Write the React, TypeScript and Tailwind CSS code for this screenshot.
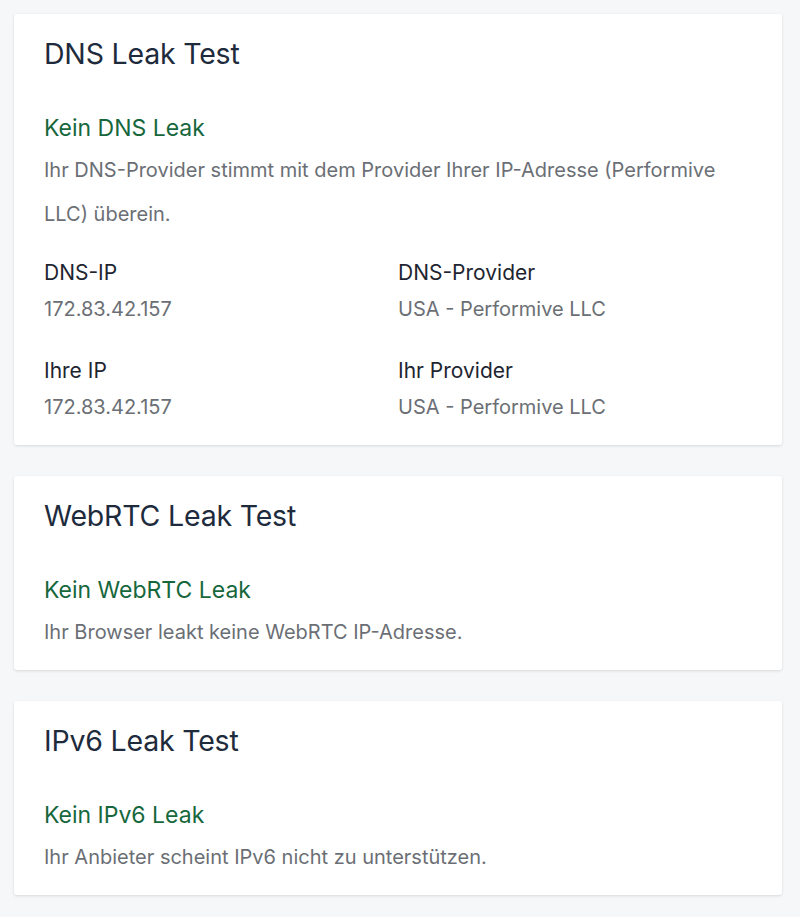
import React from "react";

const font = { fontFamily: 'Inter, "Noto Sans", sans-serif' };

function Card({ title, status, children }: { title: string; status: string; children: React.ReactNode }) {
  return (
    <div className="w-[768px] rounded-[3px] bg-white px-[30px] pt-[22px] pb-[16px] shadow-[0_1px_3px_rgba(0,0,0,0.12)]">
      <h2 className="text-[28.5px] leading-[36px] font-normal text-[#1e2b3c] tracking-[-0.2px]">{title}</h2>
      <div className="mt-[41px] text-[23px] leading-[30px] text-[#17673d]">{status}</div>
      {children}
    </div>
  );
}

function Body({ children }: { children: React.ReactNode }) {
  return <p className="mt-[5px] text-[20px] leading-[44px] text-[#6b6f75]">{children}</p>;
}

function Field({ label, value }: { label: string; value: string }) {
  return (
    <div>
      <div className="text-[21px] leading-[30px] text-[#1e2530]">{label}</div>
      <div className="mt-[6px] text-[20px] leading-[30px] text-[#6b6f75]">{value}</div>
    </div>
  );
}

export default function App() {
  return (
    <div className="min-h-[917px] bg-[#f6f7f9] px-[14px] pt-[14px] pb-[21px] flex flex-col gap-[31px]" style={font}>
      <Card title="DNS Leak Test" status="Kein DNS Leak">
        <Body>Ihr DNS-Provider stimmt mit dem Provider Ihrer IP-Adresse (Performive LLC) überein.</Body>
        <div className="mt-[22px] mb-[7px] grid grid-cols-2 gap-y-[32px]">
          <Field label="DNS-IP" value="172.83.42.157" />
          <Field label="DNS-Provider" value="USA - Performive LLC" />
          <Field label="Ihre IP" value="172.83.42.157" />
          <Field label="Ihr Provider" value="USA - Performive LLC" />
        </div>
      </Card>
      <Card title="WebRTC Leak Test" status="Kein WebRTC Leak">
        <Body>Ihr Browser leakt keine WebRTC IP-Adresse.</Body>
      </Card>
      <Card title="IPv6 Leak Test" status="Kein IPv6 Leak">
        <Body>Ihr Anbieter scheint IPv6 nicht zu unterstützen.</Body>
      </Card>
    </div>
  );
}
